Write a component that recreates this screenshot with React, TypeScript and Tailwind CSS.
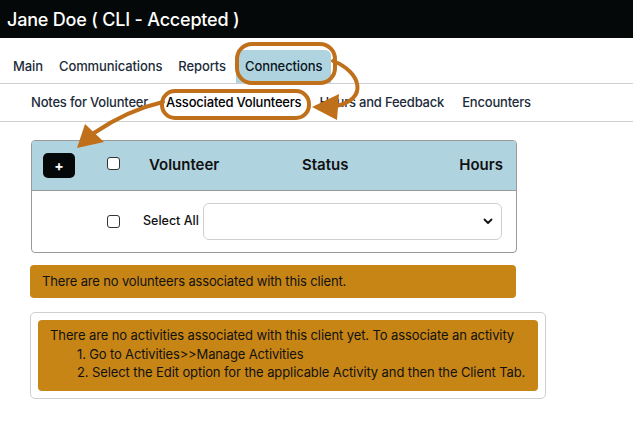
import React from "react";

const font = { fontFamily: "Inter, 'Noto Sans', sans-serif" };

export default function App() {
  return (
    <div className="relative w-[633px] h-[442px] bg-white overflow-hidden" style={font}>
      {/* Header */}
      <div className="h-[38px] bg-[#050808] flex items-center pl-[7px]">
        <span className="text-white text-[18px] font-medium tracking-[-0.2px]">Jane Doe ( CLI - Accepted )</span>
      </div>

      {/* Main nav */}
      <div className="h-[46px] border-b border-[#cfcfcf] flex items-end pl-[5px]">
        <div className="flex text-[13px] font-medium text-[#1c2b3a] tracking-[-0.1px]">
          <div className="h-[33px] px-2 flex items-center">Main</div>
          <div className="h-[33px] px-2 flex items-center">Communications</div>
          <div className="h-[33px] px-2 flex items-center">Reports</div>
          <div className="h-[33px] ml-[2px] px-[9px] flex items-center bg-[#b0d4df] rounded-t-md text-[#0b1520]">Connections</div>
        </div>
      </div>

      {/* Sub nav */}
      <div className="h-[38px] border-b border-[#cfcfcf] flex items-center pl-[22px] text-[13px] font-medium text-[#1c2b3a] tracking-[-0.2px]">
        <div className="px-[9px]">Notes for Volunteer</div>
        <div className="px-[9px] text-black">Associated Volunteers</div>
        <div className="px-[9px]">Hours and Feedback</div>
        <div className="px-[9px]">Encounters</div>
      </div>

      {/* Table card */}
      <div className="ml-[31px] mt-[18px] w-[486px] border border-[#9a9a9a] rounded-[4px] overflow-hidden">
        <div className="h-[50px] bg-[#b0d4df] border-b border-[#9a9a9a] flex items-center text-[15px] font-semibold text-[#111]">
          <div className="w-[75px] pl-[11px] flex">
            <div className="w-[32px] h-[25px] bg-[#050808] rounded-[5px] flex items-center justify-center text-white text-[14px] font-bold leading-none">+</div>
          </div>
          <div className="w-[42px] flex">
            <div className="w-[13px] h-[13px] border border-[#333] rounded-[3px] bg-white -mt-[4px]"></div>
          </div>
          <div className="w-[153px]">Volunteer</div>
          <div className="flex-1">Status</div>
          <div className="pr-[13px]">Hours</div>
        </div>
        <div className="h-[61px] flex items-center">
          <div className="w-[75px]"></div>
          <div className="w-[36px] flex">
            <div className="w-[13px] h-[13px] border border-[#333] rounded-[3px] bg-white"></div>
          </div>
          <div className="text-[12.5px] font-medium text-[#111] w-[60px]">Select All</div>
          <div className="w-[299px] h-[37px] border border-[#cfcfcf] rounded-[6px] flex items-center justify-end pr-[8px]">
            <svg width="10" height="7" viewBox="0 0 10 7">
              <path d="M1.5 1.5 L5 5 L8.5 1.5" fill="none" stroke="#111" strokeWidth="1.8" strokeLinecap="round" strokeLinejoin="round" />
            </svg>
          </div>
        </div>
      </div>

      {/* Alert 1 */}
      <div className="ml-[30px] mt-[12px] w-[486px] h-[33px] bg-[#c78516] rounded-[4px] flex items-center pl-[12px] text-[13px] text-[#111] tracking-[-0.15px]">
        There are no volunteers associated with this client.
      </div>

      {/* Card 2 */}
      <div className="ml-[30px] mt-[14px] w-[516px] border border-[#cfcfcf] rounded-[5px] p-[7px]">
        <div className="bg-[#c78516] rounded-[4px] h-[71px] pt-[6px] pl-[12px] text-[13px] leading-[18.5px] text-[#111] tracking-[-0.1px] whitespace-nowrap">
          <div>There are no activities associated with this client yet. To associate an activity</div>
          <div className="pl-[27px] tracking-[-0.15px]">1. Go to Activities&gt;&gt;Manage Activities</div>
          <div className="pl-[27px] tracking-[-0.1px]">2. Select the Edit option for the applicable Activity and then the Client Tab.</div>
        </div>
      </div>

      {/* Annotations */}
      <svg className="absolute top-0 left-0 pointer-events-none" width="633" height="442" viewBox="0 0 633 442">
        <g fill="none" stroke="#c0701a" strokeWidth="4" strokeLinecap="round">
          <rect x="237" y="44" width="98" height="39" rx="15" />
          <rect x="162" y="91" width="147" height="27" rx="13" />
          <path d="M 333 61 C 362 72, 368 100, 336 106" />
          <path d="M 163 102 Q 128 110 94 133" />
        </g>
        <g fill="#c0701a">
          <polygon points="312,107 339,94 337,120" />
          <polygon points="77,148 85,124 104,142" />
        </g>
      </svg>
    </div>
  );
}
